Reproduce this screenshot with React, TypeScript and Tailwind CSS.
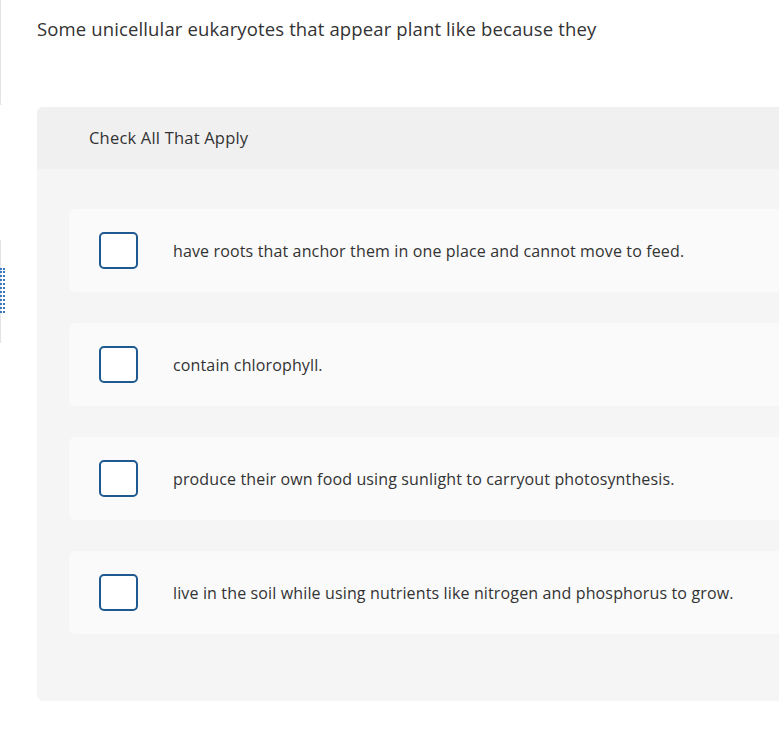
import React from 'react';

const options = [
  'have roots that anchor them in one place and cannot move to feed.',
  'contain chlorophyll.',
  'produce their own food using sunlight to carryout photosynthesis.',
  'live in the soil while using nutrients like nitrogen and phosphorus to grow.',
];

export default function App() {
  return (
    <div
      className="relative w-[779px] h-[733px] overflow-hidden bg-white text-[#333333]"
      style={{ fontFamily: '"Open Sans", Lato, sans-serif' }}
    >
      {/* left rail fragments */}
      <div className="absolute left-0 top-0 w-[2px] h-[105px] border-l border-b border-[#e4e4e4] rounded-bl-sm" />
      <div className="absolute left-0 top-[240px] w-[2px] h-[103px] border-l border-b border-[#e4e4e4] rounded-bl-sm" />
      <div className="absolute left-0 top-[268px] w-[5px] h-[45px] border-l-2 border-r-2 border-dotted border-[#3a78c2]" />

      <div className="pl-[37px] pt-[17px]">
        <p className="text-[18.5px] leading-[24px] tracking-[0.13px]">
          Some unicellular eukaryotes that appear plant like because they
        </p>

        <div className="mt-[66px] w-[800px] rounded-l-md bg-[#f5f5f5] overflow-hidden">
          <div className="h-[62px] bg-[#f0f0f0] pl-[52px] flex items-center">
            <span className="text-[16.5px] tracking-[0.2px]">Check All That Apply</span>
          </div>

          <div className="pl-[32px] pt-[40px] pb-[67px] flex flex-col gap-[31px]">
            {options.map((opt) => (
              <label
                key={opt}
                className="h-[83px] bg-[#fafafa] rounded-l-md flex items-center cursor-pointer"
              >
                <span className="ml-[30px] w-[39px] h-[37px] shrink-0 rounded-[5px] border-[2.5px] border-[#1e5a90] bg-white" />
                <span className="ml-[35px] text-[16px] tracking-[0.14px]">{opt}</span>
              </label>
            ))}
          </div>
        </div>
      </div>
    </div>
  );
}
